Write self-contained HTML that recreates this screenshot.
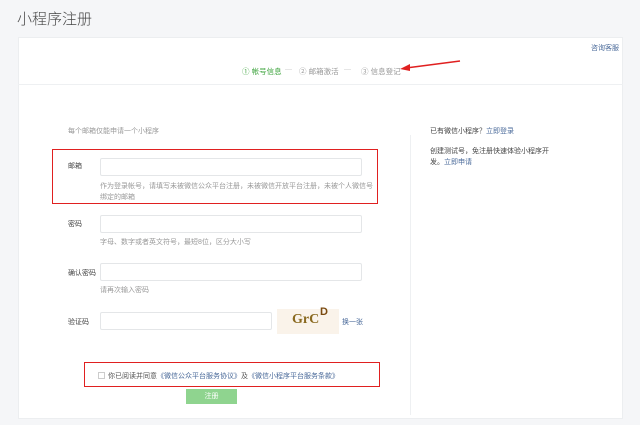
<!DOCTYPE html>
<html><head><meta charset="utf-8"><style>
*{margin:0;padding:0;box-sizing:border-box}
body{width:640px;height:425px;background:#f5f6f8;font-family:"Liberation Sans","Noto Sans CJK SC",sans-serif;position:relative;overflow:hidden;color:#333}
.a{position:absolute;white-space:nowrap}
.card{position:absolute;left:18px;top:37px;width:605px;height:382px;background:#fff;border:1px solid #eceef0}
.t{font-size:7px;color:#999}
.l{font-size:7px;color:#444}
.in{position:absolute;border:1px solid #e4e6e8;background:#fff;border-radius:2px}
.red{position:absolute;border:1px solid #e02020}
.link{color:#4a6a9a}
</style></head><body>
<div class="a" style="left:17px;top:8px;font-size:15px;color:#444;font-weight:300">小程序注册</div>
<div class="card"></div>
<div class="a" style="left:18px;top:84px;width:605px;height:1px;background:#eef0f2"></div>
<div class="a" style="left:410px;top:135px;width:1px;height:280px;background:#eef0f2"></div>
<div class="a link" style="left:591px;top:43px;font-size:7px">咨询客服</div>
<div class="a" style="left:242px;top:66px;font-size:7.5px;color:#3fa43f">① 帐号信息</div>
<div class="a" style="left:285px;top:66px;font-size:7px;color:#ccc">—</div>
<div class="a" style="left:299px;top:66px;font-size:7.5px;color:#999">② 邮箱激活</div>
<div class="a" style="left:344px;top:66px;font-size:7px;color:#ccc">—</div>
<div class="a" style="left:361px;top:66px;font-size:7.5px;color:#999">③ 信息登记</div>
<svg class="a" style="left:398px;top:58px" width="66" height="16"><path d="M62 3 L8 10" stroke="#e02020" stroke-width="1.6"/><path d="M2 11 L12 6 L12 13 Z" fill="#e02020"/></svg>
<div class="a t" style="left:68px;top:126px">每个邮箱仅能申请一个小程序</div>
<div class="red" style="left:52px;top:149px;width:326px;height:55px"></div>
<div class="a l" style="left:68px;top:161px">邮箱</div>
<div class="in" style="left:100px;top:158px;width:262px;height:18px"></div>
<div class="a t" style="left:100px;top:181px">作为登录帐号，请填写未被微信公众平台注册，未被微信开放平台注册，未被个人微信号</div>
<div class="a t" style="left:100px;top:192px">绑定的邮箱</div>
<div class="a l" style="left:68px;top:219px">密码</div>
<div class="in" style="left:100px;top:215px;width:262px;height:18px"></div>
<div class="a t" style="left:100px;top:237px">字母、数字或者英文符号，最短8位，区分大小写</div>
<div class="a l" style="left:68px;top:268px">确认密码</div>
<div class="in" style="left:100px;top:263px;width:262px;height:18px"></div>
<div class="a t" style="left:100px;top:285px">请再次输入密码</div>
<div class="a l" style="left:68px;top:317px">验证码</div>
<div class="in" style="left:100px;top:312px;width:172px;height:18px"></div>
<div class="a" style="left:277px;top:309px;width:62px;height:25px;background:#faf3ea"></div>
<div class="a" style="left:292px;top:312px;font-size:14px;font-weight:bold;color:#8a6a20;font-family:'Liberation Serif',serif">GrC</div>
<div class="a" style="left:320px;top:306px;font-size:11px;font-weight:bold;color:#7a4a10">D</div>
<div class="a link" style="left:342px;top:317px;font-size:7px">换一张</div>
<div class="red" style="left:84px;top:362px;width:296px;height:25px"></div>
<div class="a" style="left:98px;top:372px;width:7px;height:7px;border:1px solid #ccc"></div>
<div class="a" style="left:108px;top:371px;font-size:7px;color:#555">你已阅读并同意<span class="link">《微信公众平台服务协议》</span>及<span class="link">《微信小程序平台服务条款》</span></div>
<div class="a" style="left:186px;top:389px;width:51px;height:15px;background:#8fd48f;color:#fff;font-size:7px;text-align:center;line-height:15px">注册</div>
<div class="a" style="left:430px;top:126px;font-size:7px;color:#444">已有微信小程序？<span class="link">立即登录</span></div>
<div class="a" style="left:430px;top:146px;font-size:7px;color:#444;line-height:11px;white-space:normal;width:122px">创建测试号，免注册快速体验小程序开发。<span class="link">立即申请</span></div>
</body></html>
